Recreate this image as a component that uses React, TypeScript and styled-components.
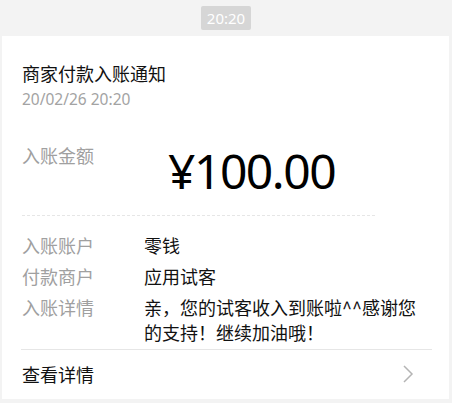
import React from "react";
import styled, { createGlobalStyle } from "styled-components";

const Global = createGlobalStyle`
  html, body { margin: 0; padding: 0; background: #f3f3f3; }
  body { font-family: "Noto Sans CJK SC", "Noto Sans", sans-serif; }
`;

const Page = styled.div`
  width: 452px;
  height: 403px;
  background: #f3f3f3;
  display: flex;
  flex-direction: column;
  align-items: stretch;
  overflow: hidden;
`;

const TimeRow = styled.div`
  display: flex;
  justify-content: center;
  padding-top: 6px;
  height: 36px;
  box-sizing: border-box;
`;

const TimeBadge = styled.div`
  height: 24px;
  padding: 0 6px;
  background: #d6d6d6;
  color: #fff;
  font-size: 15px;
  line-height: 24px;
  border-radius: 2px;
  font-family: "Noto Sans", sans-serif;
`;

const Card = styled.div`
  margin: 0 3px 4px 2px;
  background: #fff;
  flex: 1;
  display: flex;
  flex-direction: column;
`;

const Header = styled.div`
  padding: 24px 20px 0;
  display: flex;
  flex-direction: column;
`;

const Title = styled.div`
  font-size: 18px;
  line-height: 26px;
  color: #111;
`;

const DateText = styled.div`
  font-family: "Noto Sans", sans-serif;
  font-size: 15.5px;
  line-height: 20px;
  margin-top: 3px;
  color: #a3a3a3;
`;

const AmountRow = styled.div`
  display: flex;
  align-items: flex-start;
  padding: 0 20px;
  margin-top: 34px;
`;

const Label = styled.div`
  width: 122px;
  flex: none;
  font-size: 18px;
  line-height: 25px;
  color: #a0a0a0;
`;

const Amount = styled.div`
  font-family: "Noto Sans", sans-serif;
  font-size: 48px;
  line-height: 56px;
  color: #000;
  margin-left: 24px;
  margin-top: 0;
  letter-spacing: -1.5px;
`;

const Dashed = styled.div`
  margin: 16px 74px 0 20px;
  border-top: 1px dashed #e6e6e6;
`;

const Rows = styled.div`
  display: flex;
  flex-direction: column;
  gap: 6px;
  padding: 17px 20px 4px;
`;

const Row = styled.div`
  display: flex;
  align-items: flex-start;
`;

const Value = styled.div`
  font-size: 18px;
  line-height: 25px;
  color: #111;
  width: 290px;
`;

const Footer = styled.div`
  margin: 0 17px 0 19px;
  border-top: 1px solid #e6e6e6;
  display: flex;
  align-items: center;
  justify-content: space-between;
  flex: 1;
  padding: 0 18px 2px 1px;
`;

const FooterText = styled.div`
  font-size: 18px;
  color: #111;
`;

const Chevron = styled.svg`
  width: 12px;
  height: 20px;
`;

export default function App() {
  return (
    <>
      <Global />
      <Page>
        <TimeRow>
          <TimeBadge>20:20</TimeBadge>
        </TimeRow>
        <Card>
          <Header>
            <Title>商家付款入账通知</Title>
            <DateText>20/02/26 20:20</DateText>
          </Header>
          <AmountRow>
            <Label>入账金额</Label>
            <Amount>¥100.00</Amount>
          </AmountRow>
          <Dashed />
          <Rows>
            <Row>
              <Label>入账账户</Label>
              <Value>零钱</Value>
            </Row>
            <Row>
              <Label>付款商户</Label>
              <Value>应用试客</Value>
            </Row>
            <Row>
              <Label>入账详情</Label>
              <Value>亲，您的试客收入到账啦^^感谢您的支持！继续加油哦！</Value>
            </Row>
          </Rows>
          <Footer>
            <FooterText>查看详情</FooterText>
            <Chevron viewBox="0 0 12 20">
              <path d="M2 2 L10 10 L2 18" fill="none" stroke="#b4b4b4" strokeWidth="1.5" />
            </Chevron>
          </Footer>
        </Card>
      </Page>
    </>
  );
}
